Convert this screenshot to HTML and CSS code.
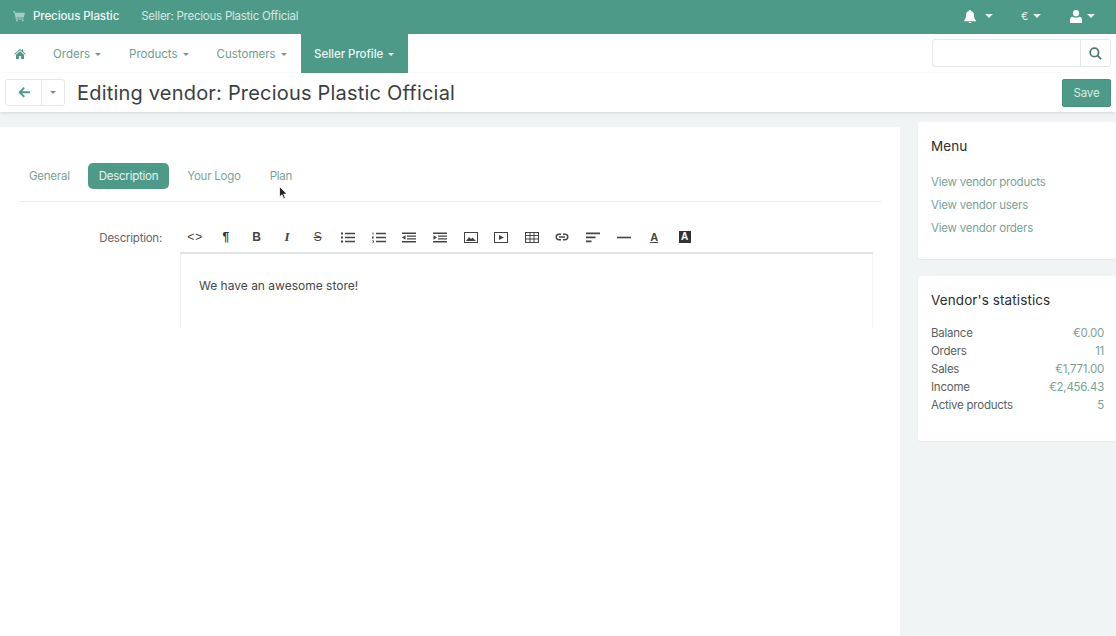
FILE: index.html
```html
<!DOCTYPE html>
<html lang="en">
<head>
  <meta charset="UTF-8" />
  <title>Editing vendor: Precious Plastic Official</title>
  <link rel="stylesheet" href="styles.css">
</head>
<body>
  <header class="topbar">
    <svg class="cart-icon" viewBox="0 0 14 12"><path d="M0 0h2.400l.5 1.500H14l-1.300 5.600H4.200l.3 1.300h8v1.100H3.400L1.600 1.100H0z"/><circle cx="4.600" cy="10.800" r="1.100"/><circle cx="11.300" cy="10.800" r="1.100"/></svg>
    <span class="brand">Precious Plastic</span>
    <span class="seller">Seller: Precious Plastic Official</span>
    <div class="top-tools">
      <span class="tool tool-bell">
        <svg class="tool-icon" viewBox="0 0 12 13"><path d="M6 0c.6 0 1 .4 1 1 2 .4 3 2 3 4 0 3 .6 4 2 5.500v.8H0v-.8C1.400 9 2 8 2 5c0-2 1-3.600 3-4 0-.6.4-1 1-1zM4.500 12h3c0 .6-.7 1-1.500 1s-1.500-.4-1.500-1z"/></svg>
        <i class="caret"></i>
      </span>
      <span class="tool tool-currency">€<i class="caret"></i></span>
      <span class="tool tool-user">
        <svg class="tool-icon" viewBox="0 0 12 13"><circle cx="6" cy="3.200" r="3.100"/><path d="M0 13v-3c0-2 1-3.200 2.800-3.300C3.700 7.400 4.800 7.800 6 7.800s2.300-.4 3.200-1.100C11 6.800 12 8 12 10v3z"/></svg>
        <i class="caret"></i>
      </span>
    </div>
  </header>

  <nav class="navbar">
    <a class="nav-item nav-home">
      <svg class="home-icon" viewBox="0 0 14 12"><path d="M7 0l2.200 1.900V.7h1.700v2.700L14 6l-.7.8L7 1.500.7 6.800 0 6zM7 2.800l4.800 4V12H8.300V8.500H5.700V12H2.200V6.800z"/></svg>
    </a>
    <a class="nav-item">Orders <i class="caret"></i></a>
    <a class="nav-item">Products <i class="caret"></i></a>
    <a class="nav-item">Customers <i class="caret"></i></a>
    <a class="nav-item active">Seller Profile <i class="caret"></i></a>
    <div class="search">
      <input class="search-input" type="text" aria-label="Search">
      <button class="search-btn" aria-label="Search">
        <svg viewBox="0 0 14 14"><circle cx="5.800" cy="5.800" r="4.500"/><path d="M9.200 9.200l3.900 3.900"/></svg>
      </button>
    </div>
  </nav>

  <div class="subheader">
    <div class="back-group">
      <button class="back-btn" aria-label="Back">
        <svg viewBox="0 0 12 11"><path d="M5.600 0l1.300 1.300-2.800 2.900H12v2.100H4.100l2.800 2.900-1.300 1.300L.3 5.300z"/></svg>
      </button>
      <button class="back-more" aria-label="More"><i class="caret"></i></button>
    </div>
    <h1 class="page-title">Editing vendor: Precious Plastic Official</h1>
    <button class="save-btn">Save</button>
  </div>

  <div class="page">
    <main class="main">
      <ul class="tabs">
        <li class="tab">General</li>
        <li class="tab active">Description</li>
        <li class="tab">Your Logo</li>
        <li class="tab">Plan</li>
      </ul>
      <div class="field">
        <label class="field-label">Description:</label>
        <div class="editor">
          <div class="toolbar">
            <span class="tb tb-text tb-code">&lt;&gt;</span>
            <span class="tb tb-text tb-para">¶</span>
            <span class="tb tb-text tb-bold">B</span>
            <span class="tb tb-text tb-italic">I</span>
            <span class="tb tb-text tb-strike">S</span>
            <span class="tb"><svg viewBox="0 0 14 10"><path d="M0 0h2v2H0zM0 4h2v2H0zM0 8h2v2H0zM4 .2h10v1.600H4zM4 4.200h10v1.600H4zM4 8.200h10v1.600H4z"/></svg></span>
            <span class="tb"><svg viewBox="0 0 14 10"><path d="M.5 0h1v2h-1zM0 4h2v.7H1V5.300h1V6H0zM0 8h2v2H0v-.6h1.200v-.3H.4v-.4h.8v-.2H0zM4 .2h10v1.600H4zM4 4.200h10v1.600H4zM4 8.200h10v1.600H4z"/></svg></span>
            <span class="tb"><svg viewBox="0 0 14 10"><path d="M0 0h14v1.400H0zM5 2.900h9v1.400H5zM5 5.700h9v1.400H5zM0 8.600h14V10H0zM3.500 2.800v4.400L0 5z"/></svg></span>
            <span class="tb"><svg viewBox="0 0 14 10"><path d="M0 0h14v1.400H0zM5 2.900h9v1.400H5zM5 5.700h9v1.400H5zM0 8.600h14V10H0zM.5 2.800v4.400L4 5z"/></svg></span>
            <span class="tb"><svg viewBox="0 0 14 11"><path fill-rule="evenodd" d="M0 0h14v11H0zM1 1v9h12V1z"/><path d="M2 9l3-4 2 2 1.500-1.500L12 9z"/></svg></span>
            <span class="tb"><svg viewBox="0 0 14 11"><path fill-rule="evenodd" d="M0 0h14v11H0zM1 1v9h12V1z"/><path d="M5 3l5 2.500L5 8z"/></svg></span>
            <span class="tb"><svg viewBox="0 0 14 11"><path fill-rule="evenodd" d="M0 0h14v11H0zM1 1v2h3.500V1zM5.500 1v2h3V1zM9.500 1v2H13V1zM1 4v2.500h3.500V4zM5.500 4v2.500h3V4zM9.500 4v2.500H13V4zM1 7.500V10h3.500V7.500zM5.500 7.500V10h3V7.500zM9.500 7.500V10H13V7.500z"/></svg></span>
            <span class="tb"><svg class="tb-link" viewBox="0 0 14 8"><path d="M6 1.200H4a2.800 2.800 0 0 0 0 5.600h2M8 1.200h2a2.800 2.800 0 0 1 0 5.600H8M4 4h6"/></svg></span>
            <span class="tb"><svg viewBox="0 0 14 10"><path d="M0 0h14v1.800H0zM0 4h9.500v1.800H0zM0 8h5.500v1.800H0z"/></svg></span>
            <span class="tb"><svg viewBox="0 0 14 10"><path d="M0 4.200h14v1.600H0z"/></svg></span>
            <span class="tb tb-text tb-color">A</span>
            <span class="tb tb-text tb-bg">A</span>
          </div>
          <div class="editor-body">We have an awesome store!</div>
        </div>
      </div>
    </main>

    <aside class="sidebar">
      <section class="card card-menu">
        <h2 class="card-title">Menu</h2>
        <a class="side-link">View vendor products</a>
        <a class="side-link">View vendor users</a>
        <a class="side-link">View vendor orders</a>
      </section>
      <section class="card card-stats">
        <h2 class="card-title">Vendor's statistics</h2>
        <div class="stat"><span>Balance</span><a>€0.00</a></div>
        <div class="stat"><span>Orders</span><a>11</a></div>
        <div class="stat"><span>Sales</span><a>€1,771.00</a></div>
        <div class="stat"><span>Income</span><a>€2,456.43</a></div>
        <div class="stat"><span>Active products</span><a>5</a></div>
      </section>
    </aside>
  </div>

  <svg class="cursor" viewBox="0 0 9 14"><path d="M.5.5v10.500l2.500-2.300 1.700 4 1.700-.7-1.700-3.900h3.300z"/></svg>
</body>
</html>
```

FILE: styles.css
```css
* {
  box-sizing: border-box;
}
html, body {
  height: 100%;
}
body {
  margin: 0;
  height: 636px;
  overflow: hidden;
  position: relative;
  font-family: Inter, "Open Sans", "Liberation Sans", sans-serif;
  font-size: 11.5px;
  letter-spacing: -0.24px;
  color: #5a5f5f;
  background: #f0f4f4;
}
a {
  color: #7aa398;
  text-decoration: none;
}
button {
  font-family: inherit;
}
.caret {
  display: inline-block;
  width: 0;
  height: 0;
  border-left: 4px solid transparent;
  border-right: 4px solid transparent;
  border-top: 4px solid currentColor;
  vertical-align: 2px;
}

/* top bar */
.topbar {
  height: 34px;
  background: #4d9a88;
  color: #fff;
  display: flex;
  align-items: center;
  padding: 0 0 2px 13px;
}
.cart-icon {
  width: 12px;
  height: 11px;
  fill: #a5cdc3;
  margin-right: 8px;
}
.brand {
  font-weight: 500;
  letter-spacing: -0.08px;
  color: #f2f8f6;
  margin-right: 22px;
}
.seller {
  color: #d7e8e3;
}
.top-tools {
  margin-left: auto;
  display: flex;
  align-items: center;
}
.tool {
  display: flex;
  align-items: center;
  font-size: 11px;
  color: #e5f0ed;
}
.tool-icon {
  width: 12px;
  height: 13px;
  fill: #fff;
}
.tool-bell .caret {
  margin-left: 9px;
}
.tool-currency {
  margin-left: 28px;
}
.tool-currency .caret {
  margin-left: 5px;
}
.tool-user {
  margin-left: 29px;
  margin-right: 21px;
}
.tool-user .caret {
  margin-left: 5px;
}

/* nav */
.navbar {
  height: 39px;
  background: #fff;
  display: flex;
  align-items: stretch;
  padding-right: 5px;
}
.nav-item {
  display: flex;
  align-items: center;
  gap: 5px;
  padding: 0 14px;
  letter-spacing: 0;
  color: #6f9c91;
}
.nav-item .caret {
  border-left-width: 3.500px;
  border-right-width: 3.500px;
  border-top-width: 3.500px;
  margin-top: 1px;
}
.nav-home {
  padding: 0 13px 0 14px;
}
.home-icon {
  width: 12px;
  height: 10px;
  fill: #4d9a88;
}
.nav-item.active {
  background: #4d9a88;
  color: #eef6f4;
  font-weight: 500;
  padding: 0 13.500px;
  letter-spacing: -0.04px;
}
.search {
  margin: 5px 0 6px auto;
  width: 179px;
  display: flex;
  border: 1px solid #e3e8e8;
  border-radius: 3px;
}
.search-input {
  flex: 1;
  min-width: 0;
  border: 0;
  outline: 0;
  background: transparent;
}
.search-btn {
  width: 30px;
  padding: 0;
  background: #fff;
  border: 0;
  border-left: 1px solid #e3e8e8;
  border-radius: 0 3px 3px 0;
  display: flex;
  align-items: center;
  justify-content: center;
}
.search-btn svg {
  width: 13px;
  height: 13px;
  fill: none;
  stroke: #44796c;
  stroke-width: 1.800;
}

/* sub header */
.subheader {
  height: 39px;
  background: #fff;
  display: flex;
  align-items: flex-start;
  padding: 6px 5px 0 5px;
  box-shadow: 0 1px 3px rgba(0, 0, 0, 0.12);
  position: relative;
}
.back-group {
  display: flex;
  height: 27px;
  width: 60px;
  border: 1px solid #e3e8e8;
  border-radius: 3px;
}
.back-btn {
  width: 36px;
  background: #fff;
  border: 0;
  border-right: 1px solid #e3e8e8;
  padding: 0;
  display: flex;
  align-items: center;
  justify-content: center;
  border-radius: 3px 0 0 3px;
}
.back-btn svg {
  width: 12px;
  height: 11px;
  fill: #4d9a88;
}
.back-more {
  flex: 1;
  background: #fff;
  border: 0;
  padding: 0;
  color: #7d8f8b;
  border-radius: 0 3px 3px 0;
}
.back-more .caret {
  border-left-width: 3.500px;
  border-right-width: 3.500px;
  border-top-width: 3.500px;
  display: block;
  margin: 0 auto;
}
.page-title {
  margin: 1px 0 0 12px;
  font-size: 20px;
  font-weight: 400;
  line-height: 27px;
  color: #3b3f40;
  letter-spacing: 0.2px;
}
.save-btn {
  margin-left: auto;
  width: 49px;
  height: 28px;
  background: #4d9a88;
  color: #d9ebe6;
  border: 1px solid #478f7e;
  border-radius: 2px;
  font-size: 11.5px;
  letter-spacing: -0.2px;
  padding: 0 0 1px 0;
}

/* page */
.page {
  display: flex;
  align-items: flex-start;
  height: 524px;
}
.main {
  width: 900px;
  height: 509px;
  margin-top: 15px;
  background: #fff;
  padding: 36px 19px 0 18px;
}
.tabs {
  list-style: none;
  margin: 0;
  padding: 0 0 12px 0;
  display: flex;
  gap: 7px;
  border-bottom: 1px solid #e9eded;
}
.tab {
  height: 26px;
  line-height: 26px;
  padding: 0 11px;
  border-radius: 5px;
  color: #7aa398;
}
.tab.active {
  background: #4d9a88;
  color: #eaf4f1;
}
.field {
  display: flex;
  margin-top: 25px;
}
.field-label {
  width: 144px;
  text-align: right;
  color: #666;
  line-height: 22px;
}
.editor {
  margin-left: 18px;
  width: 693px;
}
.toolbar {
  height: 28px;
  display: flex;
  align-items: center;
  padding-bottom: 4px;
  border-bottom: 2px solid #e2e5e5;
  margin-top: -1px;
}
.tb {
  width: 30.600px;
  display: flex;
  justify-content: center;
  align-items: center;
  color: #444;
  flex: none;
  letter-spacing: 0;
}
.tb svg {
  width: 14px;
  height: 11px;
  fill: #444;
}
.tb svg.tb-link {
  fill: none;
  stroke: #444;
  stroke-width: 1.500;
  height: 8px;
}
.tb-text {
  font-family: "Liberation Sans", sans-serif;
  font-size: 12px;
  line-height: 12px;
}
.tb-code {
  letter-spacing: 1px;
}
.tb-para {
  font-weight: 700;
  color: #333;
}
.tb-bold {
  font-weight: 700;
}
.tb-italic {
  font-family: "Liberation Serif", serif;
  font-style: italic;
  font-weight: 700;
  font-size: 13px;
}
.tb-strike {
  text-decoration: line-through;
}
.tb-color {
  font-weight: 700;
  text-decoration: underline;
  font-size: 11px;
}
.tb-bg {
  font-weight: 700;
  font-size: 10px;
  color: #fff;
  width: 12px;
  height: 12px;
  background: #333;
  margin: 0 9px;
}
.editor-body {
  height: 74px;
  padding: 24px 18px 0 18px;
  font-size: 12px;
  letter-spacing: 0;
  line-height: 16px;
  color: #444849;
  border-left: 1px solid #efefef;
  border-right: 1px solid #f4f5f5;
}

/* sidebar */
.sidebar {
  margin-left: 18px;
  width: 198px;
  margin-top: 10px;
}
.card {
  background: #fff;
  border-radius: 3px;
  box-shadow: 0 1px 2px rgba(0, 0, 0, 0.05);
  padding: 16px 12px 0 13px;
}
.card-menu {
  height: 137px;
  margin-bottom: 17px;
}
.card-stats {
  height: 165px;
}
.card-title {
  margin: 0;
  font-size: 13.500px;
  font-weight: 400;
  letter-spacing: 0.1px;
  line-height: 17px;
  color: #2b2e2e;
}
.side-link {
  display: block;
  line-height: 23px;
}
.card-menu .card-title {
  margin-bottom: 16px;
}
.card-stats .card-title {
  margin-bottom: 15px;
}
.stat {
  display: flex;
  justify-content: space-between;
  line-height: 18px;
}

.cursor {
  position: absolute;
  left: 279px;
  top: 186px;
  width: 9px;
  height: 14px;
  fill: #222;
  stroke: #fff;
  stroke-width: 0.8;
}
```
